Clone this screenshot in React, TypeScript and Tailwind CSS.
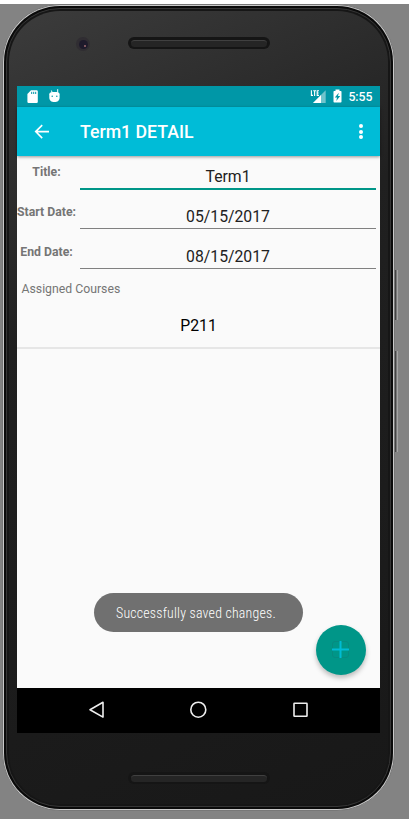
import React from 'react';

function Speaker() {
  return (
    <div className="flex h-3 w-[142px] items-center rounded-full bg-[#151515] px-[3px]">
      <div className="h-[7px] w-full rounded-full border-t border-[#404040] bg-[#252525]" />
    </div>
  );
}

function StatusBar() {
  return (
    <div className="flex h-[21px] shrink-0 items-center bg-[#0097a7] text-white">
      <svg className="ml-[10px] h-[13px] w-[11px]" viewBox="0 0 11 13">
        <path fill="white" d="M4 0.3H9.6Q10.8 0.3 10.8 1.5V11.7Q10.8 12.9 9.6 12.9H1.6Q0.4 12.9 0.4 11.7V4Z" />
        <path stroke="#0097a7" strokeWidth="1" d="M4.7 1.8V4M6.7 1.8V4M8.7 1.8V4" />
      </svg>
      <svg className="mb-px ml-[10.5px] h-[14px] w-[11px]" viewBox="0 0 11 14">
        <path stroke="white" strokeWidth="1" d="M2.4 1.5L3.3 4M8.7 0.2V4" />
        <path fill="white" d="M0.3 5.2C0.3 3.3 2 3 5.4 3S10.6 3.3 10.6 5.2V8.2C10.6 11.5 8.4 13 5.4 13S0.3 11.5 0.3 8.2Z" />
        <circle cx="3.2" cy="7.2" r=".75" fill="#0097a7" />
        <circle cx="7.8" cy="7.2" r=".75" fill="#0097a7" />
      </svg>
      <svg className="ml-auto h-[15px] w-[17px]" viewBox="0 0 17 15">
        <path fill="#70c4cd" d="M15.7 1.2V14H3Z" />
        <path fill="white" d="M11 6V14H3Z" />
        <path fill="#0097a7" d="M0 0H9.5V7.2H0Z" />
        <path fill="none" stroke="white" strokeWidth="1.1" d="M1.4 1.2V6.4H3M3.2 1.7H6M4.6 1.7V7M9 1.7H7.2V6.4H9M7.2 4H8.7" />
      </svg>
      <svg className="mb-px ml-[6px] h-[14px] w-[9px]" viewBox="0 0 9 14">
        <path fill="white" d="M2.5 .5H6.5V2H7.8Q8.5 2 8.5 2.7V12.7Q8.5 13.4 7.8 13.4H1.2Q.5 13.4 .5 12.7V2.7Q.5 2 1.2 2H2.5Z" />
        <path fill="#0097a7" d="M5.8 3.8L1.8 8.4H4L3.3 11.9L7.2 7.1H5Z" />
      </svg>
      <span className="mr-[7.5px] ml-[6px] pt-[2px] text-[12.25px] leading-none font-medium">5:55</span>
    </div>
  );
}

function Toolbar() {
  return (
    <header className="z-10 flex h-[49px] shrink-0 items-center bg-[#00bcd7] text-white shadow-[0_1px_3px_rgba(0,0,0,0.4)]">
      <svg className="ml-[17px] h-4 w-4" viewBox="0 0 16 16" fill="none" stroke="white" strokeWidth="1.6">
        <path d="M15 7.6H2M8.2 1.1L1.7 7.6L8.2 14.1" />
      </svg>
      <h1 className="ml-[30px] pt-[3px] text-[17.7px] leading-none font-medium">Term1 DETAIL</h1>
      <div className="mr-[17.5px] ml-auto flex flex-col gap-[1.5px]">
        <i className="size-[4px] rounded-full bg-white" />
        <i className="size-[4px] rounded-full bg-white" />
        <i className="size-[4px] rounded-full bg-white" />
      </div>
    </header>
  );
}

function Field({ label, value, active = false }: { label: string; value: string; active?: boolean }) {
  return (
    <div className="flex h-10">
      <label className="w-[59px] shrink-0 pt-[9px] text-center text-[12.25px] leading-[14px] font-bold whitespace-nowrap text-[#757575]">
        {label}
      </label>
      <div className="ml-1 w-[296px]">
        <div className="h-[32px] pt-[12px] text-center text-[15.75px] leading-[18px] text-[#212121]">{value}</div>
        <div className={active ? 'h-[2px] bg-[#009688]' : 'h-px bg-[#808080]'} />
      </div>
    </div>
  );
}

export default function App() {
  return (
    <div className="h-[819px] w-[409px] overflow-hidden border-t-4 border-white bg-[#838383] font-[Roboto,sans-serif]">
      <div className="flex">
        <div className="ml-[2px] h-[807px] w-[393px] shrink-0 rounded-[58px] border border-[#777] bg-[#c9c9c9] p-px">
          <div className="h-full rounded-[56px] bg-[#0a0a0a] p-[2px]">
            <div className="h-full rounded-[54px] border border-[#363636] bg-[#161616] p-[2px]">
              <div className="flex h-full flex-col rounded-[51px] bg-linear-155 from-[#3c3c3c] via-[#202020] via-35% to-[#181818] px-[8px]">
                <div className="flex h-[75px] items-start pt-[26px]">
                  <div className="ml-[59px] flex size-[14px] items-center justify-center rounded-full bg-[#302d32]">
                    <div className="flex size-[9px] items-end justify-end rounded-full bg-[#1e1a2b] p-[2px]">
                      <i className="size-[2px] rounded-full bg-[#a16b72]" />
                    </div>
                  </div>
                  <div className="ml-[38px]"><Speaker /></div>
                </div>
                <main className="flex h-[647px] w-[363px] shrink-0 flex-col bg-[#fafafa]">
                  <StatusBar />
                  <Toolbar />
                  <section className="relative h-[532px]">
                    <Field label="Title:" value="Term1" active />
                    <Field label="Start Date:" value="05/15/2017" />
                    <Field label="End Date:" value="08/15/2017" />
                    <h2 className="pt-[6px] pl-[4.5px] text-[12.25px] leading-[15px] font-normal text-[#757575]">Assigned Courses</h2>
                    <div className="flex h-[52px] items-center justify-center border-b-2 border-[#e6e6e6] pt-[8px] text-[15.75px] text-black">P211</div>
                    <div className="absolute top-[437px] left-[77px] flex h-[39px] w-[209px] items-center rounded-full bg-[#707070] pt-[2px] pl-[22px]">
                      <span className="text-[13.9px] font-light tracking-[0.2px] whitespace-nowrap text-white [font-family:'Roboto_Condensed',Roboto,sans-serif]">
                        Successfully saved changes.
                      </span>
                    </div>
                    <button aria-label="Add" className="absolute top-[469px] left-[299px] flex size-[49.5px] items-center justify-center rounded-full bg-[#009688] pr-px pb-px shadow-[0_3px_5px_rgba(0,0,0,0.25)]">
                      <span className="flex size-[17px] items-center justify-center rounded-[3px] border border-[#078b80]">
                        <svg className="size-[17px] shrink-0" viewBox="0 0 17 17">
                          <path d="M8.5 0V17M0 8.5H17" stroke="#00bcd4" strokeWidth="2" />
                        </svg>
                      </span>
                    </button>
                  </section>
                  <nav className="flex h-[45px] items-center bg-black">
                    <svg className="h-[45px] w-full" viewBox="0 0 363 45" fill="none" stroke="#eeeeee" strokeWidth="1.6">
                      <path d="M73 21.7L86 14.3V29.1Z" strokeLinejoin="round" />
                      <circle cx="181.3" cy="21.7" r="7.5" />
                      <rect x="277" y="15.2" width="13" height="13" rx=".5" />
                    </svg>
                  </nav>
                </main>
                <div className="mt-[39px] ml-[111px]"><Speaker /></div>
              </div>
            </div>
          </div>
        </div>
        <div className="flex w-[3px] flex-col pt-[266px]">
          <i className="h-[50px] border-r border-l border-r-[#a5a5a5] border-l-[#444] bg-[#777]" />
          <i className="mt-[31px] h-[101px] border-r border-l border-r-[#a5a5a5] border-l-[#444] bg-[#777]" />
        </div>
      </div>
    </div>
  );
}
